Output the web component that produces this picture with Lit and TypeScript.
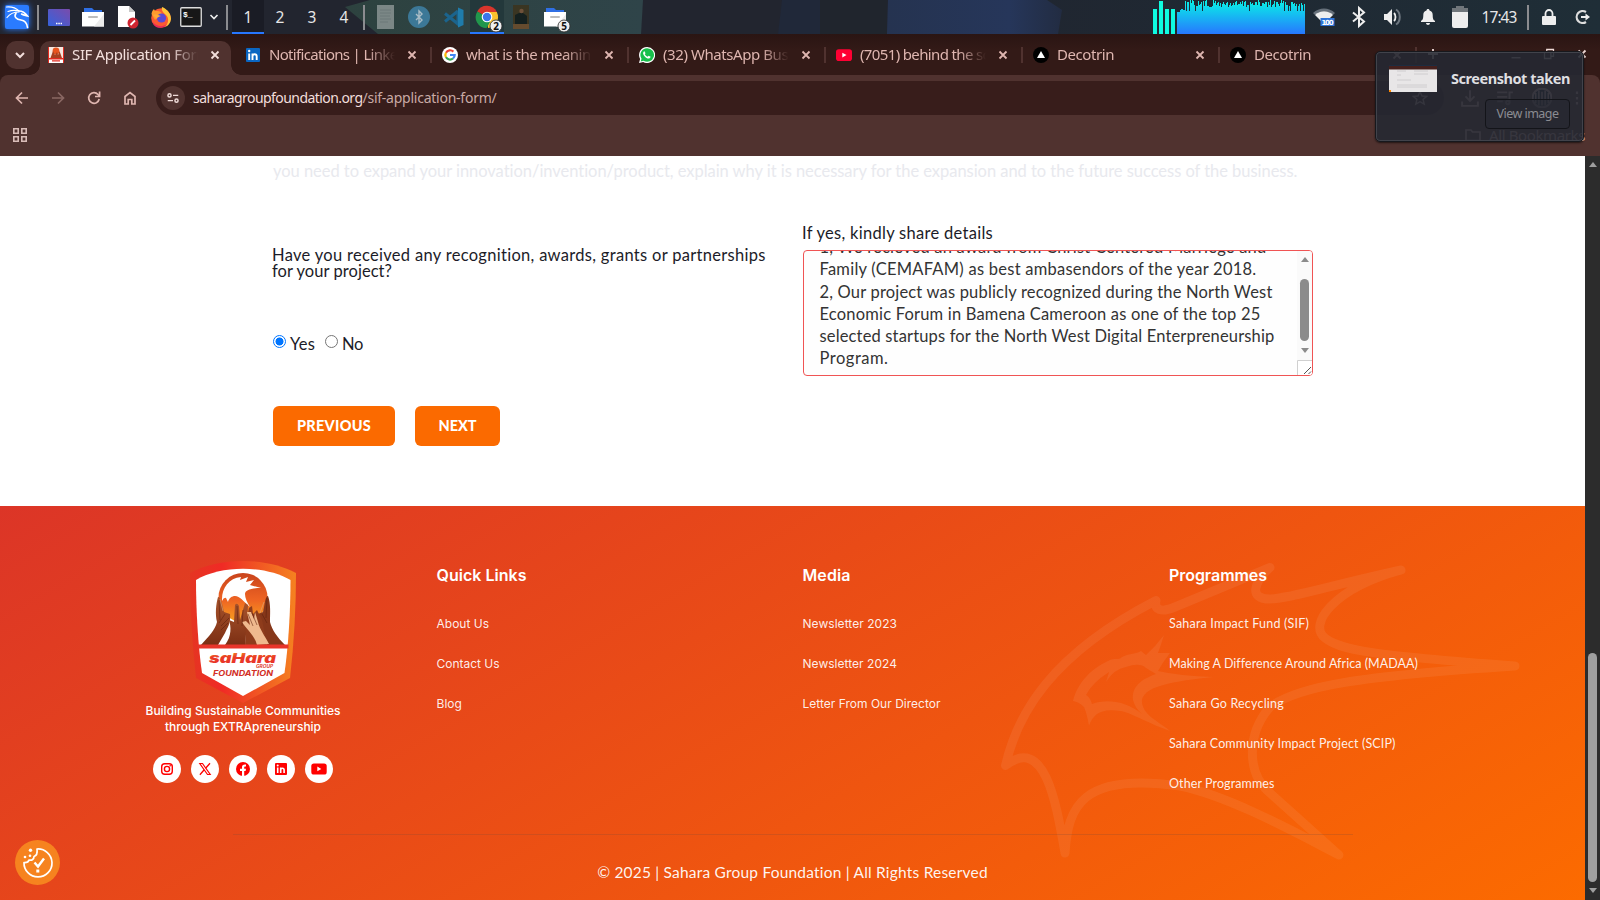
import { LitElement, html, css, svg } from "lit";
import { customElement, property } from "lit/decorators.js";

/* One line of text, tracked so that it fills the given measure. */
@customElement("fit-text")
class FitText extends LitElement {
  @property({ type: Number }) w = 0;
  @property() text = "";
  static styles = css`
    :host { display: inline-block; white-space: pre; }
  `;
  render() {
    return html`<span>${this.text}</span>`;
  }
  firstUpdated() {
    const span = this.renderRoot.querySelector("span") as HTMLElement;
    const natural = span.getBoundingClientRect().width;
    if (this.w && natural) {
      span.style.letterSpacing = `${(this.w - natural) / this.text.length}px`;
    }
  }
}

const fit = (text: string, w: number) => html`<fit-text .text=${text} .w=${w}></fit-text>`;

const folder = svg`<path d="M2 2h8l2 2h8v5H2z" fill="#2f6fe4"/><path d="M0 6h22v14.500H0z" fill="#fff"/><path d="M22 8v12.500H12z" fill="#ececec"/><path d="M7 11h8" stroke="#bdbdbd" stroke-width="2" stroke-linecap="round"/>`;

const icons: Record<string, unknown> = {
  kali: html`<svg width="26" height="26" viewBox="0 0 26 26"><rect x="1" y="1" width="24" height="24" rx="2" fill="#2a7bff"/><g fill="none" stroke="#fff" stroke-linecap="round"><path d="M2.500 3c5-.5 9.500 1 12.500 4M4 7.500c4-1.500 7-1.500 11-.5M3 13.500c3-4 7-5.500 12-5.500" stroke-width="1.200"/><path d="M12 9c-2.500 4 .5 6.500 5 7 4 .5 6 3.500 6.500 7.500" stroke-width="1.700"/><path d="M15 7c3.500 0 6 1.500 8.500 5-2-.5-4-.8-6-2" stroke-width="1.500"/></g></svg>`,
  desk: html`<svg width="22" height="17" viewBox="0 0 22 17"><defs><linearGradient id="d" x1="0" y1="1" x2="1" y2="0"><stop offset="0" stop-color="#3563dd"/><stop offset="1" stop-color="#7a4bab"/></linearGradient></defs><rect width="22" height="17" rx="1" fill="url(#d)"/><path d="M8 14.500h6" stroke="#fff" stroke-width="1.500" stroke-dasharray="1.500 .8"/></svg>`,
  folder: html`<svg width="22" height="22" viewBox="0 0 22 22">${folder}</svg>`,
  note: html`<svg width="22" height="24" viewBox="0 0 22 24"><path d="M1 1h11l6 6v15H1z" fill="#fff"/><path d="M12 1l6 6h-6z" fill="#c9c9c9"/><circle cx="16" cy="18" r="5.500" fill="#cf2430"/><path d="M13.500 20l4.500-4.500" stroke="#fff" stroke-width="1.800"/></svg>`,
  firefox: html`<svg width="22" height="22" viewBox="0 0 22 22"><circle cx="11" cy="12" r="9.800" fill="#fb5a33"/><path d="M12 1c3 1 9 5 9 12a10 10 0 01-6 8c4-4 4-9 1-12-2-2-5-4-4-8z" fill="#ffc53a"/><path d="M1.500 8C2 5 3 4 4 3c.5 1.500 1 2 2 2 3-.5 5 .5 6 3l-3 2-4 4z" fill="#ff9a2e"/><circle cx="11.500" cy="12" r="4.600" fill="#5a49d8"/><path d="M3 9c3-1 5 0 8 1-2 1-4 1-4 3z" fill="#ffab36"/><path d="M2 15c3 5 10 7 15 3-4 6-13 5-15-3z" fill="#e8285c"/></svg>`,
  term: html`<svg width="22" height="20" viewBox="0 0 22 20"><rect x=".75" y=".75" width="20.500" height="18.500" rx="1" fill="#171717" stroke="#dedede" stroke-width="1.300"/><text x="3" y="10" font-family="Liberation Mono" font-weight="700" font-size="8" fill="#fff">$_</text></svg>`,
  chev: html`<svg width="10" height="8" viewBox="0 0 10 8"><path d="M1.500 2L5 5.500 8.500 2" fill="none" stroke="#eee" stroke-width="1.600"/></svg>`,
  doc: html`<svg width="17" height="24" viewBox="0 0 17 24"><path d="M0 0h17v24H0z" fill="#7b8786"/><path d="M3 5h11M3 8h11M3 11h10M3 14h11M3 17h8" stroke="#6c7978" stroke-width="1"/></svg>`,
  btDim: html`<svg width="22" height="22" viewBox="0 0 22 22"><circle cx="11" cy="11" r="11" fill="#3c7897"/><path d="M8 8l6 6-3 3V5l3 3-6 6" fill="none" stroke="#a9bcc6" stroke-width="1.400"/></svg>`,
  code: html`<svg width="21" height="21" viewBox="0 0 21 21"><path d="M15 4v13L2 6.500M15 4L2 14.500" fill="none" stroke="#1b648d" stroke-width="3"/><path d="M15 .5l5.500 2.500v15L15 20.500z" fill="#1f7cab"/></svg>`,
  chrome: html`<svg width="24" height="24" viewBox="0 0 24 24"><path d="M12 12L2.200 6.500A11 11 0 0121.800 7z" fill="#d8352c"/><path d="M12 12V7h9.800A11 11 0 0113 23z" fill="#fbc22d"/><path d="M12 12l3 5-3.500 6.200A11 11 0 012.300 6.500z" fill="#21964c"/><circle cx="12" cy="12" r="5.300" fill="#fff"/><circle cx="12" cy="12" r="4.200" fill="#3b76ea"/><circle cx="21" cy="21" r="6" fill="#eee" stroke="#2b2b2b" stroke-width=".8"/><text x="21" y="24.600" text-anchor="middle" font-family="Noto Sans" font-weight="700" font-size="10" fill="#111">2</text></svg>`,
  pic: html`<svg width="16" height="24" viewBox="0 0 16 24"><path d="M0 0h16v24H0z" fill="#3a3522"/><path d="M2 24V10l4-2h4l4 3v13z" fill="#14201f"/><circle cx="8.500" cy="6" r="2.200" fill="#6e513a"/><path d="M0 19h16v5H0z" fill="#654b2e"/></svg>`,
  folder5: html`<svg width="22" height="22" viewBox="0 0 22 22">${folder}<circle cx="20" cy="20" r="6" fill="#eee" stroke="#2b2b2b" stroke-width=".8"/><text x="20" y="23.600" text-anchor="middle" font-family="Noto Sans" font-weight="700" font-size="10" fill="#111">5</text></svg>`,
  wifi: html`<svg width="22" height="20" viewBox="0 0 22 20"><path d="M0 6c6-6 16-6 22 0l-2 2C14 3 8 3 2 8z" fill="#66707a"/><path d="M2 8c5-5 13-5 18 0l-9 9z" fill="#eee"/><rect x="7.500" y="11" width="14" height="8" fill="#2f74d8"/><text x="14.500" y="18" text-anchor="middle" font-family="DejaVu Sans" font-weight="700" font-size="7" textLength="12" fill="#fff">100</text></svg>`,
  bt: html`<svg width="16" height="20" viewBox="0 0 16 20"><path d="M2 5.500l11 9-5 4.500V1l5 4.500-11 9" fill="none" stroke="#eee" stroke-width="2"/></svg>`,
  vol: html`<svg width="20" height="18" viewBox="0 0 20 18"><path d="M1 6h3l5-5v16l-5-5H1z" fill="#eee"/><path d="M11 5c2 2 2 6 0 8" fill="none" stroke="#eee" stroke-width="1.800"/><path d="M13 1.500c5 3 5 12 0 15" fill="none" stroke="#6e7780" stroke-width="2"/></svg>`,
  bell: html`<svg width="14" height="16" viewBox="0 0 14 16"><path d="M7 0c1 0 1.500.7 1.500 1.500C11 2 11.700 4 11.700 6c0 4 .8 5 2.300 6v1H0v-1c1.500-1 2.300-2 2.300-6 0-2 .7-4 3.200-4.500C5.500.7 6 0 7 0zM5 14h4c0 1-1 2-2 2s-2-1-2-2z" fill="#eee"/></svg>`,
  batt: html`<svg width="16" height="22" viewBox="0 0 16 22"><path d="M4 0h8v2h4v4H0V2h4z" fill="#70767b"/><path d="M0 6h16v14a2 2 0 01-2 2H2a2 2 0 01-2-2z" fill="#eee"/></svg>`,
  lock: html`<svg width="14" height="16" viewBox="0 0 14 16"><path d="M3.500 7V4.500a3.500 3.500 0 017 0V7" fill="none" stroke="#eee" stroke-width="1.800"/><rect y="7" width="14" height="9" rx="1" fill="#eee"/></svg>`,
  out: html`<svg width="16" height="16" viewBox="0 0 16 16"><path d="M11 3A6 6 0 1011 13" fill="none" stroke="#ddd" stroke-width="2.200"/><path d="M6 8h6" stroke="#eee" stroke-width="2"/><path d="M10.500 4.500L15 8l-4.500 3.500z" fill="#eee"/></svg>`,
};

const favicons: Record<string, unknown> = {
  sahara: html`<svg width="16" height="16" viewBox="0 0 16 16"><rect width="16" height="16" rx="1" fill="#fff"/><path d="M1 0h14v11H1z" fill="#f7e7df"/><circle cx="8" cy="4" r="3.400" fill="#e8541f"/><path d="M2.500 11L5 4l2 4 2-3 1 3 1.500-4L14 11z" fill="#a8401f"/><path d="M0 0h1v16H0zM15 0h1v16h-1zM1 11h14v1.500H1zM4 13.200h8v1.300H4z" fill="#e32b20"/></svg>`,
  linkedin: html`<svg width="16" height="16" viewBox="0 0 16 16"><rect x="1" y="1" width="14" height="14" rx="1" fill="#0a66c2"/><path d="M4.200 6.500V13M7.500 13V6.500M7.500 9.500c0-3 4.200-3 4.200 0V13" stroke="#fff" stroke-width="1.900" fill="none"/><circle cx="4.200" cy="4" r="1.200" fill="#fff"/></svg>`,
  google: html`<svg width="16" height="16" viewBox="0 0 16 16"><circle cx="8" cy="8" r="8" fill="#fff"/><g fill="none" stroke-width="2.200"><path d="M11.400 4.600A4.700 4.700 0 004 5.700" stroke="#ea4335"/><path d="M4 5.600a4.700 4.700 0 000 4.800" stroke="#fbbc05"/><path d="M4 10.300a4.700 4.700 0 007 1.200" stroke="#34a853"/><path d="M11 11.500a4.700 4.700 0 001.700-3.500H8" stroke="#4285f4"/></g></svg>`,
  whatsapp: html`<svg width="16" height="16" viewBox="0 0 16 16"><path d="M8 0a8 8 0 11-3.800 15L0 16l1.100-4A8 8 0 018 0z" fill="#fff"/><path d="M8 1.200A6.800 6.800 0 114.500 13.700l-2.800.7.800-2.700A6.800 6.800 0 018 1.200z" fill="#18c04c"/><path d="M5.500 4.200l1 2-.7 1c.7 1.300 1.500 2 2.800 2.600l1-1 2 1c-.3 1.700-1.800 2-3 1.600C6.500 10.700 4.700 8.800 4.200 7c-.3-1.300.3-2.600 1.300-2.800z" fill="#fff"/></svg>`,
  youtube: html`<svg width="16" height="16" viewBox="0 0 16 16"><rect y="2.300" width="16" height="11.700" rx="2.800" fill="#ff0033"/><path d="M6.300 5.800v4.600l4.200-2.300z" fill="#fff"/></svg>`,
  vercel: html`<svg width="16" height="16" viewBox="0 0 16 16"><circle cx="8" cy="8" r="8" fill="#000"/><path d="M8 4l4 7H4z" fill="#fff"/></svg>`,
};

const tabs = [
  { icon: "linkedin", text: "Notifications | LinkedIn", w: 150 },
  { icon: "google", text: "what is the meaning of", w: 150 },
  { icon: "whatsapp", text: "(32) WhatsApp Business", w: 159 },
  { icon: "youtube", text: "(7051) behind the scenes", w: 160 },
  { icon: "vercel", text: "Decotrin", w: 57 },
  { icon: "vercel", text: "Decotrin", w: 57 },
];

const closeX = html`<svg width="10" height="10" viewBox="0 0 10 10"><path d="M1.500 1.500l7 7M8.500 1.500l-7 7" stroke="currentColor" stroke-width="1.800"/></svg>`;

const spectrum = (() => {
  let seed = 7;
  const pts: string[] = ["M0 34"];
  for (let x = 0; x < 128; x++) {
    seed = (seed * 1103515245 + 12345) % 2147483648;
    const r = seed / 2147483648;
    const y = x < 3 ? 12 : x < 8 ? 7 + r * 3 : r > 0.88 ? 11 : Math.round(r * 8);
    pts.push(`L${x} ${y}L${x + 1} ${y}`);
  }
  return pts.join("") + "L128 34z";
})();

@customElement("desktop-panel")
class DesktopPanel extends LitElement {
  static styles = css`
    :host { display: grid; grid-template-columns: 34px 8px 34px 34px 36px 30px 30px 16px 10px repeat(4, 32px) 8px repeat(6, 34px) 36px 1fr 27px 128px 37px 34px 34px 35px 29px 50px 8px 34px 34px;
      height: 34px; position: relative; background: #222631; overflow: hidden; font: 15.500px/32px "Noto Sans", sans-serif; color: #e6e6e6; }
    .wall { position: absolute; inset: 0; }
    .cell { display: flex; align-items: center; justify-content: center; position: relative; }
    .cell.kali { filter: drop-shadow(0 0 3px #2a7bff); }
    .cell.on { background: #1a1c25; box-shadow: inset 0 -2px #2777ff; }
    .cell.win { background: #23383b; box-shadow: inset 0 -2px #2777ff; }
    .sep::before { content: ""; width: 2px; height: 25px; background: #8b8c90; }
    .cell svg { display: block; overflow: visible; }
    .txt { padding-bottom: 1px; }
    .end { align-items: end; justify-content: start; padding-left: 3px; }
  `;
  render() {
    const c = (k: string, cls = "") => html`<div class="cell ${cls}">${icons[k]}</div>`;
    const sep = html`<div class="cell sep"></div>`;
    return html`
      <svg class="wall" width="1600" height="34" viewBox="0 0 1600 34">
        <defs>
          <linearGradient id="g"><stop offset="0" stop-color="#2d423f"/><stop offset="1" stop-color="#2f4449"/></linearGradient>
          <linearGradient id="n"><stop offset="0" stop-color="#20242f"/><stop offset="1" stop-color="#1f2e37"/></linearGradient>
          <linearGradient id="b"><stop offset="0" stop-color="#253350"/><stop offset=".7" stop-color="#26365a"/><stop offset="1" stop-color="#222c42"/></linearGradient>
        </defs>
        <path d="M0 0h1600v34H0z" fill="#22252f"/>
        <path d="M887 0h713v34H887z" fill="url(#n)"/>
        <path d="M370 0h273l-2 34H378L345 7z" fill="url(#g)"/>
        <path d="M782 0h105v34H778z" fill="#202839"/>
        <path d="M820 0h67v34h-67z" fill="#20252d"/>
        <path d="M888 0h159l15 10-4 24H887z" fill="url(#b)"/>
      </svg>
      ${c("kali", "kali")}${sep}${c("desk")}${c("folder")}${c("note")}${c("firefox")}${c("term")}${c("chev")}${sep}
      <div class="cell txt on">1</div><div class="cell txt">2</div><div class="cell txt">3</div><div class="cell txt">4</div>
      ${sep}${c("doc")}${c("btDim")}${c("code")}${c("chrome", "win")}${c("pic")}${c("folder5")}
      <div class="cell"></div><div class="cell"></div>
      <div class="cell end"><svg width="24" height="34" viewBox="0 0 24 34"><path d="M0 9h4v25H0zM6 1h4v33H6zM12 9h4v25h-4zM18 9h4v25h-4z" fill="#0ffbe0"/></svg></div>
      <div class="cell"><svg width="128" height="34" viewBox="0 0 128 34"><defs><linearGradient id="s" x1="0" y1="0" x2="0" y2="1"><stop offset="0" stop-color="#08f3e6"/><stop offset="1" stop-color="#2777ff"/></linearGradient></defs><path d=${spectrum} fill="url(#s)" shape-rendering="crispEdges"/></svg></div>
      ${c("wifi")}${c("bt")}${c("vol")}${c("bell")}${c("batt")}
      <div class="cell txt">${fit("17:43", 35)}</div>
      ${sep}${c("lock")}${c("out")}
    `;
  }
}

@customElement("browser-chrome")
class BrowserChrome extends LitElement {
  static styles = css`
    :host { display: block; height: 122px; font-family: "Noto Sans", sans-serif; font-size: 15px; color: #dfb6b0; }
    .strip { height: 41px; display: flex; background: linear-gradient(#2a1513, #331a17 40%); padding-left: 6px; position: relative; }
    .drop { width: 28px; height: 28px; margin: 7px 6px 0 0; border-radius: 10px; background: #50322f; display: grid; place-items: center; color: #f2dedb; }
    .active { width: 191px; height: 34px; margin-top: 7px; border-radius: 10px 10px 0 0; background: #50322f; display: flex; align-items: center; padding-left: 8px; box-sizing: border-box; color: #f2dedb; position: relative; padding-bottom: 7px; }
    .active::before, .active::after { content: ""; position: absolute; bottom: 0; width: 10px; height: 10px; }
    .active::before { left: -10px; background: radial-gradient(circle at 0 0, transparent 9.500px, #50322f 10px); }
    .active::after { right: -10px; background: radial-gradient(circle at 100% 0, transparent 9.500px, #50322f 10px); }
    .tab { width: 197px; height: 34px; margin-top: 7px; display: flex; align-items: center; box-sizing: border-box; padding: 0 0 7px 10px; background: linear-gradient(#50322f, #50322f) right 6px / 2px 16px no-repeat; }
    .tab.first { margin-left: 4px; }
    .title { width: 126px; margin: 0 0 2px 8px; overflow: hidden; white-space: nowrap; line-height: 22px; -webkit-mask-image: linear-gradient(90deg, #000 78%, transparent); mask-image: linear-gradient(90deg, #000 78%, transparent); }
    .x { margin-left: 12px; }
    .controls { display: flex; align-items: center; padding: 0 13px 1px 8px; flex: 1; color: #eedad7; }
    .controls .min { margin-left: auto; }
    .controls .res { margin: 0 22px 0 21px; }
    .bar { height: 40px; background: #50322f; display: flex; align-items: center; padding: 6px 15px 0 14px; border-radius: 8px 8px 0 0; box-sizing: border-box; }
    .under { background: #331a17; }
    .nav { display: flex; gap: 20px; width: 142px; }
    .dim { opacity: .4; }
    .url { flex: 1; height: 34px; border-radius: 17px; background: #381d1b; display: flex; align-items: center; padding: 0 16px 0 5px; font-size: 14px; color: #c9aaa5; margin-right: 17px; }
    .url fit-text { padding-bottom: 1px; display: block; }
    .site { width: 24px; height: 24px; border-radius: 12px; background: #50322f; display: grid; place-items: center; margin-right: 8px; color: #eedad7; }
    .host { color: #f2dedb; }
    .star { margin-left: auto; }
    .tools { display: flex; gap: 17.300px; align-items: center; }
    .marks { height: 40px; background: #50322f; border-bottom: 1px solid #62494a; display: flex; align-items: center; justify-content: space-between; padding: 0 15px 1px 13px; }
    .all { display: flex; align-items: center; gap: 8px; line-height: 20px; }
    .all fit-text { padding-bottom: 1px; }
    svg { display: block; }
  `;
  render() {
    const s = (body: unknown, w = 16, cls = "") => html`<svg class=${cls} width=${w} height=${w} viewBox="0 0 16 16" fill="none" stroke="currentColor" stroke-width="1.700">${body}</svg>`;
    return html`
      <div class="strip">
        <div class="drop">${s(svg`<path d="M4 6l4 4 4-4" stroke-width="2"/>`)}</div>
        <div class="active">${favicons.sahara}<div class="title">${fit("SIF Application Form", 138)}</div><span class="x">${closeX}</span></div>
        ${tabs.map((t, i) => html`<div class="tab ${i ? "" : "first"}">${favicons[t.icon]}<div class="title">${fit(t.text, t.w)}</div><span class="x">${closeX}</span></div>`)}
        <div class="controls">
          ${s(svg`<path d="M8 3v10M3 8h10" stroke-width="1.800"/>`, 16)}
          ${s(svg`<path d="M2 13h12" stroke-width="1.800"/>`, 12, "min")}
          ${s(svg`<path d="M2 5.500h8.500V14H2zM5 5V2h9v9h-3"/>`, 12, "res")}
          ${closeX}
        </div>
      </div>
      <div class="under"><div class="bar">
        <div class="nav">
          ${s(svg`<path d="M14 8H2.500M8 2.500L2.500 8 8 13.500"/>`)}
          ${s(svg`<path d="M2 8h11.500M8 2.500L13.500 8 8 13.500"/>`, 16, "dim")}
          ${s(svg`<path d="M13.200 9A5.300 5.300 0 1112 4.500l1.400 1.500M13.600 1.500V6.500H9"/>`)}
          ${s(svg`<path d="M3 6.500L8 2.500l5 4V14H9.800V9.500H6.200V14H3z"/>`)}
        </div>
        <div class="url">
          <div class="site">${s(svg`<circle cx="4" cy="5" r="1.800"/><path d="M8 5h6M2 11h6"/><circle cx="12" cy="11" r="1.800"/>`, 14)}</div>
          <span class="host">${fit("saharagroupfoundation.org", 169.5)}</span>${fit("/sif-application-form/", 134)}
          ${s(svg`<path d="M8 1.500l2 4.500 4.700.4-3.600 3.100 1.100 4.600L8 11.700l-4.200 2.400 1.100-4.600L1.300 6.400 6 6z" stroke-width="1.400"/>`, 16, "star")}
        </div>
        <div class="tools">
          ${s(svg`<path d="M8 1v9M4 6.500L8 10.500l4-4M1 11v4h14v-4"/>`, 18)}
          ${s(svg`<path d="M1 3h9M1 7h9M1 11h5M12 12V3h3"/><circle cx="10.500" cy="12" r="1.500"/>`, 18)}
          ${s(svg`<circle cx="8" cy="8" r="7.500" fill="#0c1420"/><path d="M3 4v8M5.500 2v12M8 3v11M10.500 2v12M13 4v8" stroke-width="1.200"/>`, 20)}
          ${s(svg`<path d="M8 1.500v2.500M8 7v2.500M8 12v2.500" stroke-width="2.200"/>`, 16)}
        </div>
      </div></div>
      <div class="marks">
        <svg width="14" height="14" viewBox="0 0 14 14" fill="none" stroke="#d9bcb8" stroke-width="1.600"><path d="M.8.8h4.400v4.400H.8zM8.800.8h4.400v4.400H8.800zM.8 8.800h4.400v4.400H.8zM8.800 8.800h4.400v4.400H8.800z"/></svg>
        <div class="all">${s(svg`<path d="M1 3h5l1.500 2H15v8.500H1z"/>`)}${fit("All Bookmarks", 96)}</div>
      </div>
    `;
  }
}

@customElement("shot-toast")
class ShotToast extends LitElement {
  static styles = css`
    :host { display: flex; box-sizing: border-box; width: 209px; height: 91px; padding: 12px 13px 0 12px; border: 1px solid #17181d; box-shadow: inset 0 0 0 1px #41434b, 0 1px 2px #0009; border-radius: 5px; background: rgba(37, 40, 50, .9); font: 700 14.500px "Noto Sans", sans-serif; color: #dfdfe1; }
    svg { flex: none; margin: 1px 0 0 1px; }
    .col { flex: 1; display: flex; flex-direction: column; align-items: flex-end; }
    .t { line-height: 28px; height: 28px; }
    .btn { width: 85px; height: 30px; box-sizing: border-box; border: 1px solid #131419; border-radius: 4px; margin-top: 7px; font-weight: 400; font-size: 12.500px; line-height: 28px; text-align: center; color: #8b8c92; background: rgba(38, 40, 50, .5); }
  `;
  render() {
    return html`
      <svg width="48" height="28" viewBox="0 0 48 28"><path d="M0 0h48v27H0z" fill="#e8e6e7"/><path d="M0 0h48v4.500H0z" fill="#45201d"/><path d="M0 0h48v1H0z" fill="#1d2c40"/><path d="M8 6h9M25 6h14M8 10h4M25 9h14M8 15h14M8 20h30M8 22h30" stroke="#c9c6ca" stroke-width=".8"/><path d="M0 25h2v2H0z" fill="#f80"/></svg>
      <div class="col"><div class="t">${fit("Screenshot taken", 119)}</div><div class="btn">${fit("View image", 62)}</div></div>
    `;
  }
}

@customElement("form-section")
class FormSection extends LitElement {
  static styles = css`
    :host { display: block; height: 350px; box-sizing: border-box; padding: 5px 0 0 272px; background: #fff; color: #1c1c28; font: 16.500px/20px Lato, sans-serif; }
    .hint { height: 20px; color: #e8e9ee; padding-left: 1px; }
    .cols { display: grid; grid-template-columns: 530px 511px; }
    .left { padding-top: 66px; }
    .q { line-height: 16px; height: 32px; }
    .q fit-text { display: block; }
    .radios { display: flex; margin-top: 55px; height: 20px; }
    .dot { box-sizing: border-box; width: 13px; height: 13px; border: 1px solid #767676; border-radius: 50%; margin: 1px 4px 0 1px; }
    .dot.on { border-color: #0075ff; border-width: 1.500px; background: radial-gradient(circle, #0075ff 3.700px, #fff 4.300px); }
    .dot.gap { margin-left: 10px; }
    .btns { display: flex; gap: 20px; margin: 52px 0 0 1px; }
    .btn { height: 40px; width: 122px; border-radius: 6px; background: #fb6a00; color: #fff; font: 900 14.500px/40px Lato, sans-serif; text-align: center; }
    .btn.next { width: 85px; }
    .right { padding-top: 42px; }
    .area { margin: 7px 0 0 1px; width: 510px; height: 126px; box-sizing: border-box; border: 1px solid #f05454; border-radius: 4px; display: grid; grid-template-columns: 1fr 15px; overflow: hidden; background: #fefefe; color: #333; }
    .lines { padding-left: 15.500px; margin-top: -15px; line-height: 22.300px; }
    .lines fit-text { display: block; }
    .sb { background: #fafafa; display: flex; flex-direction: column; align-items: center; height: 124px; }
    .tri { width: 0; height: 0; border: 4.500px solid transparent; }
    .up { border-bottom: 5px solid #8b8b8b; border-top: 0; margin-top: 6px; }
    .thumb { width: 9px; height: 62px; border-radius: 5px; background: #8b8b8b; margin-top: 17px; }
    .down { border-top: 5px solid #8b8b8b; border-bottom: 0; margin: 7px 0 auto; }
    .grip { display: block; }
  `;
  render() {
    return html`
      <div class="hint">${fit("you need to expand your innovation/invention/product, explain why it is necessary for the expansion and to the future success of the business.", 1025)}</div>
      <div class="cols">
        <div class="left">
          <div class="q">${fit("Have you received any recognition, awards, grants or partnerships", 494)}${fit("for your project?", 120)}</div>
          <div class="radios"><i class="dot on"></i>${fit("Yes", 25)}<i class="dot gap"></i>${fit("No", 21)}</div>
          <div class="btns"><div class="btn">${fit("PREVIOUS", 74)}</div><div class="btn next">${fit("NEXT", 38)}</div></div>
        </div>
        <div class="right">
          <div>${fit("If yes, kindly share details", 191)}</div>
          <div class="area">
            <div class="lines">
              ${fit("1, We recieved an award from Christ Centered Marriege and", 447)}
              ${fit("Family (CEMAFAM) as best ambasendors of the year 2018.", 437)}
              ${fit("2, Our project was publicly recognized during the North West", 453)}
              ${fit("Economic Forum in Bamena Cameroon as one of the top 25", 441)}
              ${fit("selected startups for the North West Digital Enterpreneurship", 455)}
              ${fit("Program.", 69)}
            </div>
            <div class="sb"><i class="tri up"></i><i class="thumb"></i><i class="tri down"></i>
              <svg class="grip" width="15" height="15" viewBox="0 0 15 15"><path d="M0 0h15v15H0z" fill="#fff"/><path d="M.5 15V.5H15" fill="none" stroke="#d0d0d0"/><path d="M7 14l7-7M11.500 14l2.500-2.500" stroke="#555"/></svg>
            </div>
          </div>
        </div>
      </div>
    `;
  }
}

const socials = [
  svg`<rect x="8.700" y="8.700" width="10.600" height="10.600" rx="3" fill="none" stroke="#f00" stroke-width="1.400"/><circle cx="14" cy="14" r="2.600" fill="none" stroke="#f00" stroke-width="1.400"/><circle cx="17.200" cy="10.800" r=".8" fill="#f00"/>`,
  svg`<path d="M8.800 8.500h2.700l7.700 11h-2.700z" fill="none" stroke="#f00" stroke-width="1.200"/><path d="M19 8.300l-4.400 5M13.200 14.800l-4.300 4.900" stroke="#f00" stroke-width="1.300"/>`,
  svg`<circle cx="14" cy="14" r="7" fill="#f00"/><path d="M13 21v-5h-2v-2.200h2v-1.700c0-2 1.300-3 4-2.600v1.900c-1.500-.1-1.800.2-1.800 1v1.400H17l-.4 2.200h-1.400v5z" fill="#fff"/>`,
  svg`<rect x="8" y="8" width="12" height="12" rx="1" fill="#f00"/><path d="M10.700 12.600v5.400M13.700 18v-5.400M13.700 15c0-2.400 3.400-2.400 3.400 0v3" stroke="#fff" stroke-width="1.600" fill="none"/><circle cx="10.700" cy="10.600" r="1" fill="#fff"/>`,
  svg`<rect x="6.300" y="8.500" width="15.400" height="11" rx="2.600" fill="#f00"/><path d="M12.300 11.600v4.600l4-2.300z" fill="#fff"/>`,
];

@customElement("site-footer")
class SiteFooter extends LitElement {
  static styles = css`
    :host { display: block; height: 394px; position: relative; overflow: hidden; background: linear-gradient(150deg, #dc3527, #fc6b00); color: #fff; font-family: Inter, sans-serif; }
    .bird { position: absolute; left: 980px; top: 34px; }
    .grid { display: grid; grid-template-columns: 436px 366px 367px 1fr; height: 328px; position: relative; }
    .brand { padding: 54px 0 0 50px; display: flex; flex-direction: column; align-items: center; font-size: 12px; line-height: 16px; font-weight: 500; }
    .brand svg { display: block; }
    .tag { margin-top: -1px; text-align: center; height: 32px; display: flex; flex-direction: column; align-items: center; }
    .soc { display: flex; gap: 10px; margin-top: 20px; }
    .soc i { width: 28px; height: 28px; border-radius: 50%; background: #fff; }
    .col { padding: 59px 0 0 .5px; font-size: 12px; line-height: 40px; color: #ffffffeb; }
    .col h4 { margin: 0 0 19px; font-size: 16px; font-weight: 600; line-height: 20px; color: #fff; }
    .col fit-text { display: block; }
    .mul { font-family: Lato, sans-serif; font-size: 12.500px; padding-left: 0; }
    .mul h4 { font-family: Inter, sans-serif; }
    .rule { height: 1px; width: 1120px; margin-left: 233px; background: #7a4a3a3d; position: relative; }
    .copy { margin: 27px 0 0; text-align: center; font: 15.500px/20px Lato, sans-serif; position: relative; color: #fffffff0; }
    .cookie { position: absolute; left: 15px; bottom: 15px; }
  `;
  render() {
    return html`
      <svg class="bird" width="605" height="360" viewBox="0 0 605 360" fill="none" stroke="#fff" stroke-opacity=".065" stroke-width="9" stroke-linejoin="round" stroke-linecap="round">
        <path d="M25.500 225.500C37 175 70 115 176 60.500C174 70 181 73 195 67L290 27.500C274 42 268 59 290 59C312 58 340 48 421 30C352 49 328 85 345 98C360 110 390 115 535 126C380 136 318 146 290 167C265 196 268 235 290 253L359 315C320 295 250 256 200 246C100 232 88 268 85 313C76 262 65 195 25.500 225.500Z"/>
        <path d="M93 161C97 143 112 128 128 121C135 117 138 121 142 117C150 113 156 114 161 111L166 115Q176 106 184 95Q181 105 178 113L190 113Q183 122 178 131Q200 136 234 137C195 141 160 146 162 163C164 176 180 182 190 191C165 182 150 172 140 171C120 168 113 175 109 186Q107 174 104 167Q99 162 93 161ZM106 155Q112 143 129 132L126 142Q134 129 146 127Q160 122 166 128L176 134C156 141 152 150 153 160Q155 168 162 174C145 160 125 159 112 164Q110 157 106 155Z" stroke="none" fill="#fff" fill-opacity=".065" fill-rule="evenodd"/>
      </svg>
      <div class="grid">
        <div class="brand">
          <svg width="108" height="144" viewBox="0 0 108 144">
            <defs>
              <linearGradient id="sh"><stop offset="0" stop-color="#e53522"/><stop offset=".3" stop-color="#f02a25"/><stop offset=".55" stop-color="#f04a24"/><stop offset="1" stop-color="#f58220"/></linearGradient>
              <linearGradient id="ball" x1="0" y1="0" x2="0" y2="1"><stop offset="0" stop-color="#c9441c"/><stop offset=".55" stop-color="#ee6423"/><stop offset="1" stop-color="#f8a01f"/></linearGradient>
              <linearGradient id="word" x1="0" y1="0" x2="0" y2="1"><stop offset="0" stop-color="#f39324"/><stop offset=".45" stop-color="#ea3c26"/><stop offset="1" stop-color="#e8312a"/></linearGradient>
              <linearGradient id="arm" x1="0" y1="0" x2="0" y2="1"><stop offset="0" stop-color="#a8542c"/><stop offset="1" stop-color="#7c2f14"/></linearGradient>
            </defs>
            <path d="M1 13C30-3 78-3 107 13c0 35-2 70-6 105L54 143 7 118C3 83 1 48 1 13z" fill="url(#sh)"/>
            <path d="M7 20C32 5 76 5 101.500 20c0 30-2 65-6 93L54 136 13 113C9 85 7 50 7 20z" fill="#fff"/>
            <circle cx="54" cy="37.500" r="24.500" fill="url(#ball)"/>
            <path d="M33 39C33 28 40 18 52 17L51 20L59 17L57 22L65 20L61 25L72 28C62 28 56 30 56 34C56 38 58 42 61 47C54 41 51 36 46 36C43 36 40 38 39 42L37 38Q35 37 33 41Z" fill="#fff"/>
            <path d="M12 85C20 76 26 70 28 62C26 54 27 44 29 37C32 37 33 44 35 52L41 54C42 64 38 68 36 73L29 85Z" fill="url(#arm)"/>
            <path d="M96 85C88 77 83 70 81 62C81 54 82 44 79 36C76 36 76 44 74 52L69 54C70 64 73 70 75 76L78 85Z" fill="#86371a"/>
            <path d="M36 85C43 76 42 66 40 60L45 62L46 45Q48 42 50 46L51 60L56 43L59 45L58 64L56 85Z" fill="url(#arm)"/>
            <path d="M56 85L57 62L60 48L63 46L64 54L68 50L73 60L78 85Z" fill="#8e3c1c"/>
            <path d="M53 62L57 61L61 65L58 52L62 52L65 59L66 52L69 62C71 70 76 76 80 84L68 85C65 74 57 69 53 62Z" fill="#efb98e"/>
            <path d="M30 40l1 20M36 54l-6 9M40 58l-8 8M39 63l-7 7M48 46l1 18M54 50l-1 16M78 38l-1 20M73 54l5 9M59 54l5 12M63 53l5 12" stroke="#5b1d0c" stroke-width=".9" fill="none" opacity=".6"/>
            <path d="M31 39l3 12M71 53l4-11" stroke="#e0a070" stroke-width="1" opacity=".7"/>
            <path d="M8.500 84.500H99.500V88.500H8.800z" fill="#e8352a"/>
            <text x="20" y="103" font-family="Inter, sans-serif" font-style="italic" font-weight="900" font-size="13" textLength="67" lengthAdjust="spacingAndGlyphs" fill="url(#word)">saHara</text>
            <text x="67" y="108.300" font-family="Inter, sans-serif" font-style="italic" font-weight="700" font-size="4.300" textLength="17" lengthAdjust="spacingAndGlyphs" fill="#e0402c">GROUP</text>
            <text x="24" y="116.300" font-family="Inter, sans-serif" font-style="italic" font-weight="700" font-size="7.600" textLength="60" lengthAdjust="spacingAndGlyphs" fill="#d22f27">FOUNDATION</text>
          </svg>
          <div class="tag">${fit("Building Sustainable Communities", 195)}${fit("through EXTRApreneurship", 156)}</div>
          <div class="soc">${socials.map((b) => html`<i><svg width="28" height="28" viewBox="0 0 28 28">${b}</svg></i>`)}</div>
        </div>
        <div class="col"><h4>${fit("Quick Links", 90)}</h4>${fit("About Us", 52.5)}${fit("Contact Us", 63)}${fit("Blog", 25.5)}</div>
        <div class="col"><h4>${fit("Media", 48)}</h4>${fit("Newsletter 2023", 94.5)}${fit("Newsletter 2024", 94.5)}${fit("Letter From Our Director", 138)}</div>
        <div class="col mul"><h4>${fit("Programmes", 98)}</h4>${fit("Sahara Impact Fund (SIF)", 140)}${fit("Making A Difference Around Africa (MADAA)", 248.5)}${fit("Sahara Go Recycling", 115)}${fit("Sahara Community Impact Project (SCIP)", 226.5)}${fit("Other Programmes", 105.5)}</div>
      </div>
      <div class="rule"></div>
      <div class="copy">${fit("© 2025 | Sahara Group Foundation | All Rights Reserved", 391)}</div>
      <svg class="cookie" width="45" height="45" viewBox="0 0 45 45"><circle cx="22.500" cy="22.500" r="22.500" fill="#f6831f"/><path d="M22 9a14 14 0 11-13 13.500c3 .2 4.500-.5 5-2.500 3 .8 5-1 5-3.500 3-1 3.500-4 3-7.500z" fill="none" stroke="#fff" stroke-width="1.700" stroke-linejoin="round"/><path d="M19.500 22.500l3.500 4 6-8" fill="none" stroke="#fff" stroke-width="2.400"/><path d="M21.300 29.500h3v3h-3z" fill="#fff"/><circle cx="15.500" cy="10.300" r="1.700" fill="#fff"/><circle cx="10" cy="17" r="1.300" fill="#fff"/><circle cx="15" cy="15.700" r="1.300" fill="#fff"/></svg>
    `;
  }
}

@customElement("app-root")
class AppRoot extends LitElement {
  static styles = css`
    :host { display: block; width: 1600px; height: 900px; overflow: hidden; position: relative; background: #fff; }
    .view { display: grid; grid-template-columns: 1fr 15px; height: 744px; }
    .sb { background: #2c2c2c; display: flex; flex-direction: column; align-items: center; }
    .tri { border: 4.500px solid transparent; }
    .up { border-bottom: 5px solid #9f9f9f; border-top: 0; margin-top: 6px; }
    .thumb { width: 9px; height: 229px; border-radius: 5px; background: #9f9f9f; margin-top: auto; }
    .down { border-top: 5px solid #9f9f9f; border-bottom: 0; margin: 6px 0 7px; }
    .toast { position: absolute; left: 1375px; top: 51px; }
  `;
  render() {
    return html`
      <desktop-panel></desktop-panel>
      <browser-chrome></browser-chrome>
      <div class="view">
        <div><form-section></form-section><site-footer></site-footer></div>
        <div class="sb"><i class="tri up"></i><i class="thumb"></i><i class="tri down"></i></div>
      </div>
      <shot-toast class="toast"></shot-toast>
    `;
  }
}
